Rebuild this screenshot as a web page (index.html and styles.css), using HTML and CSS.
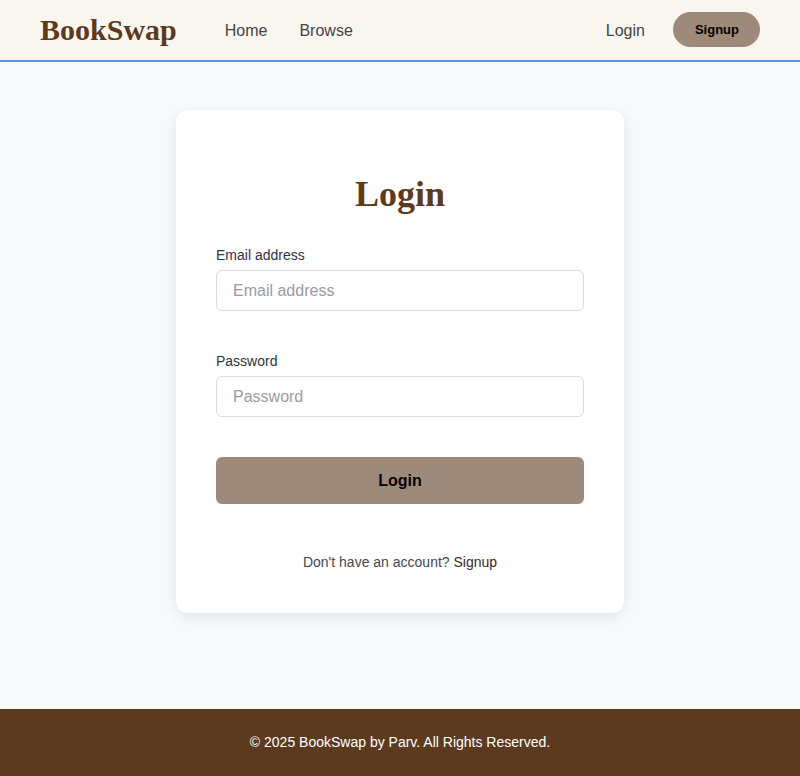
FILE: index.html
```html
<!DOCTYPE html>
<html lang="en">
<head>
<meta charset="utf-8">
<title>BookSwap - Login</title>
<link rel="stylesheet" href="styles.css">
</head>
<body>
<header class="navbar">
  <div class="nav-left">
    <a class="logo" href="#">BookSwap</a>
    <nav class="nav-links">
      <a href="#">Home</a>
      <a href="#">Browse</a>
    </nav>
  </div>
  <div class="nav-right">
    <a class="nav-login" href="#">Login</a>
    <a class="nav-signup" href="#">Signup</a>
  </div>
</header>
<main class="main">
  <div class="card">
    <h2 class="card-title">Login</h2>
    <form class="form">
      <div class="form-group">
        <label class="label">Email address</label>
        <input class="input" type="email" placeholder="Email address">
      </div>
      <div class="form-group">
        <label class="label">Password</label>
        <input class="input" type="password" placeholder="Password">
      </div>
      <button class="submit" type="button">Login</button>
    </form>
    <p class="switch">Don't have an account? <a href="#">Signup</a></p>
  </div>
</main>
<footer class="footer">© 2025 BookSwap by Parv. All Rights Reserved.</footer>
</body>
</html>
```
FILE: styles.css
```css
* { box-sizing: border-box; }
html, body { margin: 0; padding: 0; }
body {
  min-height: 100vh;
  display: flex;
  flex-direction: column;
  background: #f8f9fb;
  font-family: "Liberation Sans", Arial, sans-serif;
}
a { text-decoration: none; }
.navbar {
  height: 62px;
  background: #f9f6f0;
  border-bottom: 2px solid #5b8fdc;
  display: flex;
  align-items: center;
  justify-content: space-between;
  padding: 0 40px;
}
.nav-left { display: flex; align-items: center; }
.logo {
  font-family: "Liberation Serif", "Times New Roman", serif;
  font-weight: bold;
  font-size: 30px;
  color: #5c3a1e;
}
.nav-links { display: flex; gap: 32px; margin-left: 48px; margin-top: 2px; }
.nav-links a, .nav-login {
  font-size: 16px;
  color: #444;
}
.nav-login { margin-top: 2px; }
.nav-right { display: flex; align-items: center; gap: 28px; }
.nav-signup {
  background: #9e8a7a;
  color: #000;
  font-weight: bold;
  font-size: 13px;
  line-height: 17px;
  padding: 9px 21px 9px 22px;
  border-radius: 18px;
  margin-top: -2px;
}
.main {
  flex: 1;
  display: flex;
  justify-content: center;
  align-items: flex-start;
  padding-top: 48px;
}
.card {
  width: 448px;
  background: #fff;
  border-radius: 12px;
  box-shadow: 0 4px 14px rgba(0,0,0,0.09);
  padding: 40px 40px 43px;
}
.card-title {
  font-family: "Liberation Serif", "Times New Roman", serif;
  font-weight: bold;
  font-size: 36px;
  line-height: 41px;
  color: #5c3a1e;
  text-align: center;
  margin: 24px 0 30px;
}
.form-group {
  display: flex;
  flex-direction: column;
  margin-bottom: 40px;
}
.label {
  font-size: 14px;
  line-height: 20px;
  color: #2f3340;
  margin-bottom: 5px;
}
.input {
  height: 41px;
  border: 1px solid #dcdcdc;
  border-radius: 6px;
  padding: 0 16px;
  font-family: "Liberation Sans", Arial, sans-serif;
  font-size: 16px;
  color: #333;
  background: #fff;
}
.input::placeholder { color: #9a9a9f; }
.submit {
  width: 100%;
  height: 47px;
  border: none;
  border-radius: 6px;
  background: #9e8a7a;
  color: #000;
  font-family: "Liberation Sans", Arial, sans-serif;
  font-weight: bold;
  font-size: 16px;
  display: block;
}
.switch {
  text-align: center;
  font-size: 14px;
  line-height: 16px;
  color: #444851;
  margin: 50px 0 0;
}
.switch a { color: #3a2a1e; }
.footer {
  height: 67px;
  background: #5c3a1e;
  color: #fff;
  font-size: 14px;
  display: flex;
  align-items: center;
  justify-content: center;
  padding-bottom: 2px;
}
```
